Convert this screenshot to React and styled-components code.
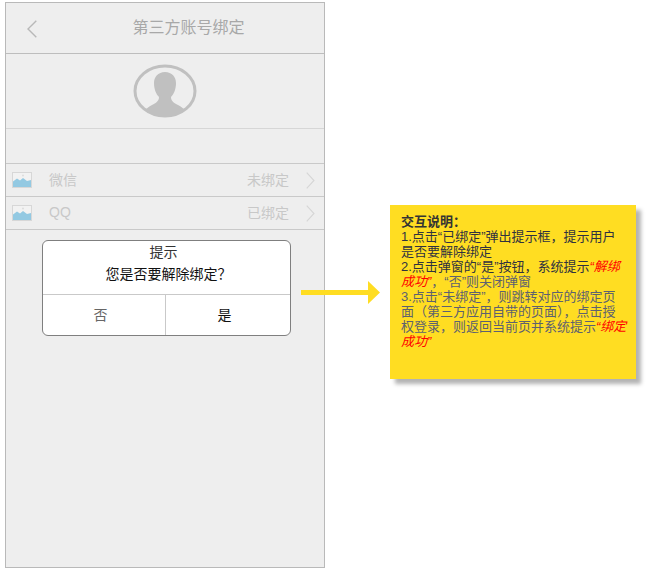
import React from 'react';
import styled, { createGlobalStyle } from 'styled-components';

const GlobalStyle = createGlobalStyle`
  html, body {
    margin: 0;
    padding: 0;
    background: #fff;
  }
  body {
    font-family: "Liberation Sans", "Noto Sans CJK SC", sans-serif;
  }
`;

const Page = styled.div`
  display: flex;
  align-items: flex-start;
  width: 649px;
  height: 571px;
  padding: 2px 0 0 5px;
  box-sizing: border-box;
  overflow: hidden;
`;

const Phone = styled.div`
  position: relative;
  flex: none;
  width: 320px;
  height: 566px;
  box-sizing: border-box;
  background: #eeeeee;
  border: 1px solid #b9b9b9;
`;

const Header = styled.header`
  display: flex;
  align-items: center;
  justify-content: center;
  position: relative;
  height: 46px;
  padding: 0 0 4px 47px;
  border-bottom: 1px solid #bdbdbd;
  font-size: 16px;
  color: #a8a8a8;
`;

const Back = styled.svg`
  position: absolute;
  left: 21px;
  top: 17px;
`;

const AvatarBox = styled.div`
  display: flex;
  justify-content: center;
  align-items: center;
  height: 74px;
  border-bottom: 1px solid #d6d6d6;
`;

const Rows = styled.div`
  margin-top: 34px;
  border-top: 1px solid #c9c9c9;
`;

const Row = styled.div`
  display: flex;
  align-items: center;
  height: 32px;
  padding: 0 9px 0 6px;
  border-bottom: 1px solid #c9c9c9;
  font-size: 14px;
  color: #c8c8c8;
`;

const RowName = styled.span`
  margin-left: 17px;
  flex: 1;
  padding-bottom: 3px;
`;

const RowState = styled.span`
  margin-right: 17px;
  padding-bottom: 3px;
`;

const Dialog = styled.div`
  position: absolute;
  left: 36px;
  top: 237px;
  width: 249px;
  height: 96px;
  box-sizing: border-box;
  background: #fff;
  border: 1px solid #7f7f7f;
  border-radius: 6px;
  display: flex;
  flex-direction: column;
`;

const DialogBody = styled.div`
  height: 54px;
  padding-top: 2px;
  box-sizing: border-box;
  text-align: center;
  border-bottom: 1px solid #c9c9c9;
  font-size: 14px;
  line-height: 19px;
  color: #333;
`;

const DialogTitle = styled.div`
  padding-right: 6px;
`;

const DialogMessage = styled.div`
  padding-left: 4px;
  color: #111;
  line-height: 24px;
`;

const DialogButtons = styled.div`
  flex: 1;
  display: flex;
`;

const DialogButton = styled.div`
  display: flex;
  align-items: center;
  justify-content: center;
  box-sizing: border-box;
  width: ${(p) => (p.$primary ? '125px' : '122px')};
  padding: 0 7px 2px 0;
  font-size: 14px;
  color: ${(p) => (p.$primary ? '#111' : '#666')};
  & + & {
    border-left: 1px solid #c9c9c9;
  }
`;

const Arrow = styled.svg`
  position: relative;
  flex: none;
  margin: 279px 0 0 -24px;
`;

const Note = styled.div`
  flex: none;
  width: 246px;
  height: 174px;
  margin: 203px 0 0 9px;
  padding: 9px 9px 0 11px;
  box-sizing: border-box;
  background: #ffdd22;
  box-shadow: 5px 5px 4px rgba(0, 0, 0, 0.3);
  font-size: 13px;
  line-height: 15px;
  color: #333;
`;

const NoteTitle = styled.div`
  font-weight: bold;
`;

const Dark = styled.span`
  color: #2f3140;
`;

const Muted = styled.span`
  color: #5d6170;
`;

const Red = styled.em`
  color: #ff0000;
`;

const PictureIcon = () => (
  <svg width="20" height="16" viewBox="0 0 20 16">
    <rect x="0.5" y="0.5" width="19" height="15" fill="#f2f2f2" stroke="#d7d7d7" />
    <path d="M1 15V9.5L5 6.5L8 8.5L11 6L15 9L19 8V15Z" fill="#93c9e2" />
    <circle cx="11" cy="3.5" r="1" fill="#dcdcdc" />
  </svg>
);

const Chevron = () => (
  <svg width="9" height="17" viewBox="0 0 9 17">
    <path d="M0.7 0.7L8 8.5L0.7 16.3" fill="none" stroke="#d6d6d6" strokeWidth="1.1" />
  </svg>
);

const App = () => (
  <>
    <GlobalStyle />
    <Page>
      <Phone>
        <Header>
          <Back width="10" height="18" viewBox="0 0 10 18">
            <path d="M9.3 0.7L1 9L9.3 17.3" fill="none" stroke="#b8b8b8" strokeWidth="1.4" />
          </Back>
          第三方账号绑定
        </Header>
        <AvatarBox>
          <svg width="64" height="54" viewBox="0 0 64 54">
            <ellipse cx="32" cy="27" rx="30" ry="25" fill="none" stroke="#c0c0c0" strokeWidth="3" />
            <path
              d="M32 8C25 8 21 13 21 19C21 25 23 30 26 33C26 37 23 39 19 41C15 43 13 45 12 46C18 50 25 52 32 52C39 52 46 50 52 46C51 45 49 43 45 41C41 39 38 37 38 33C41 30 43 25 43 19C43 13 39 8 32 8Z"
              fill="#c0c0c0"
            />
          </svg>
        </AvatarBox>
        <Rows>
          <Row>
            <PictureIcon />
            <RowName>微信</RowName>
            <RowState>未绑定</RowState>
            <Chevron />
          </Row>
          <Row>
            <PictureIcon />
            <RowName>QQ</RowName>
            <RowState>已绑定</RowState>
            <Chevron />
          </Row>
        </Rows>
        <Dialog>
          <DialogBody>
            <DialogTitle>提示</DialogTitle>
            <DialogMessage>您是否要解除绑定？</DialogMessage>
          </DialogBody>
          <DialogButtons>
            <DialogButton>否</DialogButton>
            <DialogButton $primary>是</DialogButton>
          </DialogButtons>
        </Dialog>
      </Phone>
      <Arrow width="80" height="24" viewBox="0 0 80 24">
        <path d="M0 9H67V0L79 11.5L67 23V14H0Z" fill="#ffdd22" />
      </Arrow>
      <Note>
        <NoteTitle>交互说明：</NoteTitle>
        <Dark>1.点击“已绑定”弹出提示框，提示用户是否要解除绑定</Dark>
        <br />
        <Dark>2.点击弹窗的“是”按钮，系统提示</Dark>
        <Red>“解绑成功”</Red>
        <Muted>，“否”则关闭弹窗</Muted>
        <br />
        <Muted>3.点击“未绑定”，则跳转对应的绑定页面（第三方应用自带的页面），点击授权登录，则返回当前页并系统提示</Muted>
        <Red>“绑定成功”</Red>
      </Note>
    </Page>
  </>
);

export default App;
